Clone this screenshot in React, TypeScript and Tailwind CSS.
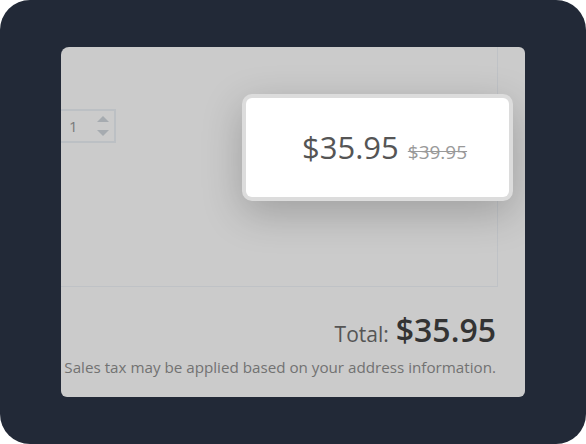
export default function App() {
  return (
    <div className="w-[586px] h-[444px] bg-white">
      <div className="w-[586px] h-[444px] bg-[#222937] rounded-[30px] pt-[47px] pl-[61px] font-['Open_Sans',sans-serif]">
        <div className="relative w-[464px] h-[350px] bg-[#cbcbcb] rounded-[6px] rounded-tl-[8px] overflow-hidden">
          <div className="w-[437px] h-[240px] border-r border-b border-[#bfc2c6] pt-[62px]">
            <div className="ml-[-20px] w-[75px] h-[34px] border-2 border-[#bcc0c4] flex items-center justify-between pl-[26px] pr-[5px]">
              <span className="text-[15px] text-[#7a7a7a] leading-none">1</span>
              <div className="flex flex-col items-center gap-[8px]">
                <svg width="12" height="6" viewBox="0 0 12 6"><path d="M0 6 6 0 12 6z" fill="#a6abb0" /></svg>
                <svg width="12" height="6" viewBox="0 0 12 6"><path d="M0 0 6 6 12 0z" fill="#a6abb0" /></svg>
              </div>
            </div>
          </div>

          <div className="absolute left-[181px] top-[47px] w-[271px] h-[107px] rounded-[10px] bg-[#dcdcdc] p-[4px] shadow-[0_12px_40px_rgba(0,0,0,0.22)]">
            <div className="w-full h-full bg-white rounded-[6px] flex items-baseline pl-[56px] pt-[34px]">
              <span className="text-[31px] text-[#555] leading-none">$35.95</span>
              <span className="ml-[9px] text-[19px] text-[#999] line-through leading-none">$39.95</span>
            </div>
          </div>

          <div className="pr-[29px] pt-[27px] flex flex-col items-end">
            <div className="flex items-baseline">
              <span className="text-[21px] text-[#555] leading-none">Total:</span>
              <span className="ml-[7px] text-[32px] font-semibold text-[#333] leading-none">$35.95</span>
            </div>
            <div className="mt-[14px] text-[15.2px] text-[#727272] leading-none whitespace-nowrap">Sales tax may be applied based on your address information.</div>
          </div>
        </div>
      </div>
    </div>
  );
}
